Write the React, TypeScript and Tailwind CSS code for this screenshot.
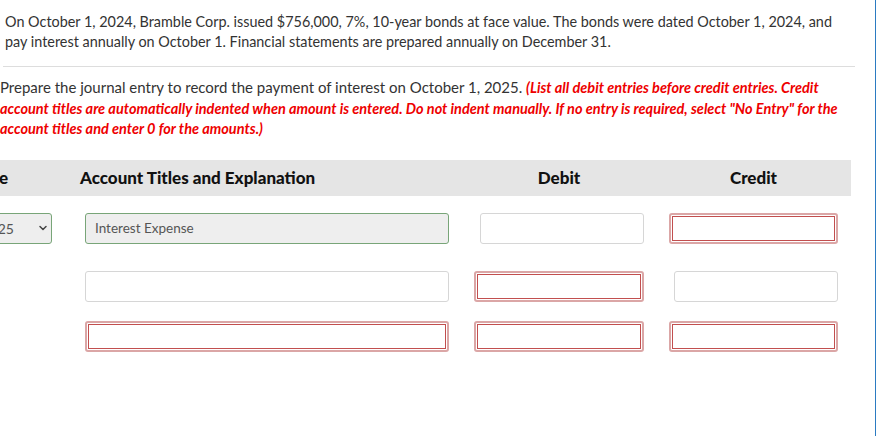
import React from 'react';
import { ChevronDown } from 'lucide-react';

type Box = 'plain' | 'red' | 'filled';

function Field({ kind, width, text }: { kind: Box; width: string; text?: string }) {
  if (kind === 'red') {
    return (
      <div className={`${width} h-[31px] rounded-[3px] border-2 border-[#dba6a6] p-px bg-white`}>
        <div className="h-full w-full border border-[#c24f4f]" />
      </div>
    );
  }
  if (kind === 'filled') {
    return (
      <div className={`${width} h-[31px] rounded-[3px] border-[1.5px] border-[#78a578] bg-[#eeeeee] flex items-center pl-[9px] text-[13.5px] text-[#555]`}>
        {text}
      </div>
    );
  }
  return <div className={`${width} h-[31px] rounded-[3px] border-[1.5px] border-[#d6d6d6] bg-white`} />;
}

const rows: { acc: Box; debit: Box; credit: Box; date?: boolean; mt: string }[] = [
  { acc: 'filled', debit: 'plain', credit: 'red', date: true, mt: 'mt-[17px]' },
  { acc: 'plain', debit: 'red', credit: 'plain', mt: 'mt-[27px]' },
  { acc: 'red', debit: 'red', credit: 'red', mt: 'mt-[19px]' },
];

export default function App() {
  return (
    <div className="min-h-[436px] w-full overflow-hidden border-r border-[#2b7bc2] bg-white font-['Lato',sans-serif]">
      <p className="pt-3 pl-[5px] pr-[30px] text-[14.4px] leading-5 text-[#333]">
        On October 1, 2024, Bramble Corp. issued $756,000, 7%, 10-year bonds at face value. The bonds were dated October 1, 2024, and pay interest annually on October 1. Financial statements are prepared annually on December 31.
      </p>
      <div className="mt-[14px] ml-[3px] mr-[20px] h-px bg-[#dddddd]" />
      <p className="mt-[10px] pr-[20px] text-[15px] leading-[20.5px] text-[#333]">
        Prepare the journal entry to record the payment of interest on October 1, 2025.{' '}
        <span className="text-[14.5px] leading-none font-bold italic text-[#ee0000]">
          (List all debit entries before credit entries. Credit account titles are automatically indented when amount is entered. Do not indent manually. If no entry is required, select "No Entry" for the account titles and enter 0 for the amounts.)
        </span>
      </p>

      <div className="mt-[21px] -ml-[98px] mr-[24px] flex h-9 items-center bg-[#e5e5e5] text-[17px] font-black text-[#111]">
        <div className="w-[150px] pr-[44px] text-right">Date</div>
        <div className="ml-[33px] w-[364px] -translate-x-[5px]">Account Titles and Explanation</div>
        <div className="w-[195px] pl-[25px] text-center">Debit</div>
        <div className="w-[194px] pl-[25px] text-center">Credit</div>
      </div>

      {rows.map((r, i) => (
        <div key={i} className={`${r.mt} -ml-[98px] flex items-center`}>
          <div className="w-[150px]">
            {r.date && (
              <div className="flex h-[31px] items-center justify-end rounded-[3px] border-[1.5px] border-[#78a578] bg-[#eeeeee] pr-[2px] text-[14px] text-[#555]">
                <span>Oct. 1, 2025</span>
                <ChevronDown className="ml-[23px] text-[#444]" size={12} strokeWidth={3} />
              </div>
            )}
          </div>
          <div className="ml-[33px]">
            <Field kind={r.acc} width="w-[364px]" text="Interest Expense" />
          </div>
          <div className="flex w-[195px] justify-end">
            <Field kind={r.debit} width={r.debit === 'red' ? 'w-[170px]' : 'w-[164px]'} />
          </div>
          <div className="flex w-[194px] justify-end">
            <Field kind={r.credit} width={r.credit === 'red' ? 'w-[169px]' : 'w-[164px]'} />
          </div>
        </div>
      ))}
    </div>
  );
}
